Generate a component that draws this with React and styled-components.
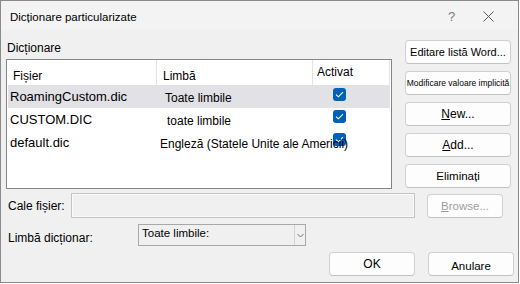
import React from 'react';
import styled, { createGlobalStyle } from 'styled-components';

const Global = createGlobalStyle`
  html, body { margin: 0; padding: 0; background: #ffffff; }
  body { font-family: "Liberation Sans", Arial, sans-serif; }
`;

const Window = styled.div`
  width: 519px;
  height: 283px;
  box-sizing: border-box;
  border: 1px solid #8a8a8a;
  background: #f0f0f0;
  display: flex;
  flex-direction: column;
  font-family: "Liberation Sans", Arial, sans-serif;
  font-size: 12px;
  color: #000;
  overflow: hidden;
`;

const TitleBar = styled.div`
  height: 29px;
  flex: none;
  display: flex;
  align-items: center;
  padding-left: 9px;
  background: #f3f3f3;
`;

const Title = styled.div`
  flex: 1;
  font-size: 11.5px;
  padding-top: 3px;
`;

const HelpGlyph = styled.div`
  width: 12px;
  font-size: 13px;
  color: #7a7a7a;
  margin-right: 23px;
  padding-top: 2px;
`;

const CloseIcon = styled.svg`
  width: 11px;
  height: 11px;
  margin-right: 24px;
  margin-top: 2px;
`;

const Main = styled.div`
  display: flex;
  gap: 13px;
  padding: 10px 0 0 5px;
`;

const LeftCol = styled.div`
  width: 386px;
  display: flex;
  flex-direction: column;
`;

const GroupLabel = styled.div`
  height: 19px;
  line-height: 16px;
  padding-left: 1px;
`;

const ListBox = styled.div`
  width: 386px;
  height: 130px;
  box-sizing: border-box;
  border: 1px solid #858585;
  background: #fff;
  padding: 0 1px;
`;

const Grid = styled.div`
  display: grid;
  grid-template-columns: 149px 156px 77px;
`;

const HeadCell = styled.div`
  height: 25px;
  box-sizing: border-box;
  border-right: 1px solid #e3e3e3;
  padding-left: ${p => p.$pad}px;
  padding-top: ${p => p.$top}px;
  line-height: 16px;
  white-space: nowrap;
`;

const Row = styled.div`
  display: contents;
`;

const Cell = styled.div`
  height: 23px;
  box-sizing: border-box;
  background: ${p => (p.$selected ? '#e1e1e6' : 'transparent')};
  white-space: nowrap;
`;

const NameCell = styled(Cell)`
  font-size: 13px;
  line-height: 23px;
  padding-left: 2px;
`;

const LangCell = styled(Cell)`
  font-size: 12px;
  line-height: 23px;
  padding-top: 2px;
  padding-left: ${p => p.$indent}px;
  position: relative;
  z-index: 1;
  overflow: visible;
`;

const CheckCell = styled(Cell)`
  padding-left: 20px;
  padding-top: ${p => p.$top}px;
`;

const Check = styled.div`
  width: 13px;
  height: 13px;
  border-radius: 3px;
  background: #005fb8;
  display: flex;
  align-items: center;
  justify-content: center;
`;

const RightCol = styled.div`
  width: 106px;
  display: flex;
  flex-direction: column;
  gap: 7px;
`;

const Button = styled.button`
  width: ${p => p.$w || 106}px;
  height: 24px;
  box-sizing: border-box;
  border: 1px solid #d0d0d0;
  border-bottom-color: #c2c2c2;
  border-radius: 4px;
  background: #fdfdfd;
  font-family: "Liberation Sans", Arial, sans-serif;
  font-size: ${p => p.$fs || 12}px;
  color: ${p => (p.disabled ? '#9d9d9d' : '#000')};
  padding: 0;
  padding-top: ${p => p.$top || 0}px;
  white-space: nowrap;
  overflow: hidden;
  text-align: center;
  line-height: 16px;
  flex: none;
`;

const U = styled.span`
  text-decoration: underline;
  text-underline-offset: 1px;
`;

const FieldRow = styled.div`
  display: flex;
  align-items: center;
  padding-left: 7px;
  margin-top: ${p => p.$mt}px;
`;

const FieldLabel = styled.div`
  width: ${p => p.$w}px;
  flex: none;
  padding-top: ${p => p.$top || 0}px;
`;

const PathInput = styled.div`
  width: 344px;
  height: 25px;
  box-sizing: border-box;
  border: 1px solid #c3c3c3;
  box-shadow: inset 0 0 0 1px #fbfbfb;
  background: #f0f0f0;
  margin-right: 12px;
`;

const Select = styled.div`
  width: 168px;
  height: 22px;
  box-sizing: border-box;
  border: 1px solid #a8a8a8;
  background: #f0f0f0;
  display: flex;
  align-items: stretch;
`;

const SelectText = styled.div`
  flex: 1;
  padding-left: 3px;
  font-size: 11.5px;
  line-height: 17px;
`;

const SelectArrow = styled.div`
  width: 10px;
  border-left: 1px solid #d2d2d2;
  display: flex;
  align-items: center;
  justify-content: center;
`;

const Footer = styled.div`
  display: flex;
  justify-content: flex-end;
  gap: 13px;
  padding-right: 4px;
  margin-top: 6px;
`;

const rows = [
  { name: 'RoamingCustom.dic', lang: 'Toate limbile', indent: 8, selected: true, ctop: 3 },
  { name: 'CUSTOM.DIC', lang: 'toate limbile', indent: 10, ctop: 2 },
  { name: 'default.dic', lang: 'Engleză (Statele Unite ale Americii)', indent: 3, ctop: 2 },
];

const CheckMark = () => (
  <svg width="9" height="7" viewBox="0 0 9 7">
    <path d="M1 3.6 L3.4 5.8 L8 1.2" fill="none" stroke="#fff" strokeWidth="1.1" />
  </svg>
);

export default function App() {
  return (
    <>
      <Global />
      <Window>
        <TitleBar>
          <Title>Dicționare particularizate</Title>
          <HelpGlyph>?</HelpGlyph>
          <CloseIcon viewBox="0 0 11 11">
            <path d="M0.5 0.5 L10.5 10.5 M10.5 0.5 L0.5 10.5" stroke="#5a5a5a" strokeWidth="1" fill="none" />
          </CloseIcon>
        </TitleBar>
        <Main>
          <LeftCol>
            <GroupLabel>Dicționare</GroupLabel>
            <ListBox>
              <Grid>
                <HeadCell $pad={5} $top={8}>Fișier</HeadCell>
                <HeadCell $pad={6} $top={8}>Limbă</HeadCell>
                <HeadCell $pad={4} $top={4}>Activat</HeadCell>
                {rows.map(r => (
                  <Row key={r.name}>
                    <NameCell $selected={r.selected}>{r.name}</NameCell>
                    <LangCell $selected={r.selected} $indent={r.indent}>{r.lang}</LangCell>
                    <CheckCell $selected={r.selected} $top={r.ctop}>
                      <Check><CheckMark /></Check>
                    </CheckCell>
                  </Row>
                ))}
              </Grid>
            </ListBox>
          </LeftCol>
          <RightCol>
            <Button $fs={11}>Editare listă Word...</Button>
            <Button $fs={8.5}>Modificare valoare implicită</Button>
            <Button><U>N</U>ew...</Button>
            <Button><U>A</U>dd...</Button>
            <Button $fs={11.5}>Eliminați</Button>
          </RightCol>
        </Main>
        <FieldRow $mt={4}>
          <FieldLabel $w={63}>Cale fișier:</FieldLabel>
          <PathInput />
          <Button $w={76} $fs={11.5} disabled><U>B</U>rowse...</Button>
        </FieldRow>
        <FieldRow $mt={6}>
          <FieldLabel $w={130} $top={6}>Limbă dicționar:</FieldLabel>
          <Select>
            <SelectText>Toate limbile:</SelectText>
            <SelectArrow>
              <svg width="7" height="5" viewBox="0 0 7 5">
                <path d="M0.5 1 L3.5 4 L6.5 1" fill="none" stroke="#707070" strokeWidth="1" />
              </svg>
            </SelectArrow>
          </Select>
        </FieldRow>
        <Footer>
          <Button $w={86} $top={0}>OK</Button>
          <Button $w={86} $fs={11.5} $top={3}>Anulare</Button>
        </Footer>
      </Window>
    </>
  );
}
